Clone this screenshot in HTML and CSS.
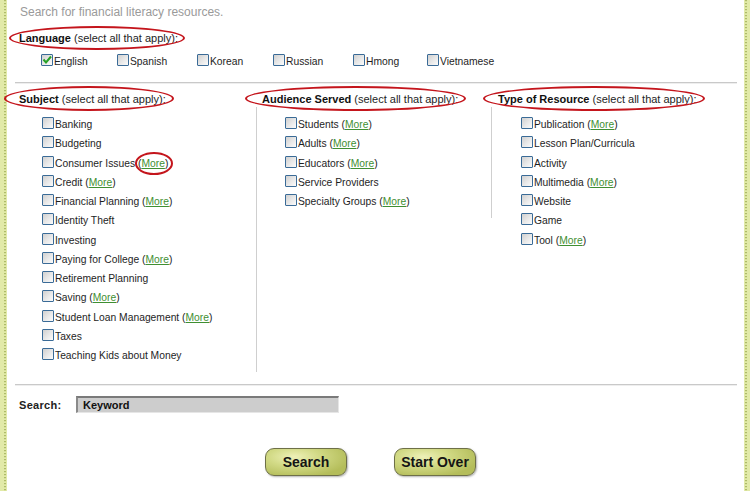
FILE: index.html
```html
<!DOCTYPE html>
<html lang="en">
<head>
<meta charset="utf-8">
<title>Search for financial literacy resources</title>
<link rel="stylesheet" href="styles.css">
</head>
<body>
<div class="page">
  <div class="edge edge-left"></div>
  <main class="main">
    <p class="intro">Search for financial literacy resources.</p>

    <section class="lang">
      <h2 class="hd"><span class="ring ring-lang"><b>Language</b> (select all that apply):</span></h2>
      <div class="lang-row">
        <label class="opt"><span class="cb"><svg class="tick" viewBox="0 0 12 12"><path d="M2.5 5.5 L5 8.5 L10 2.5" /></svg></span><span class="txt">English</span></label>
        <label class="opt"><span class="cb"></span><span class="txt">Spanish</span></label>
        <label class="opt"><span class="cb"></span><span class="txt">Korean</span></label>
        <label class="opt"><span class="cb"></span><span class="txt">Russian</span></label>
        <label class="opt"><span class="cb"></span><span class="txt">Hmong</span></label>
        <label class="opt"><span class="cb"></span><span class="txt">Vietnamese</span></label>
      </div>
    </section>

    <hr class="rule">

    <section class="cols">
      <div class="col col-subject">
        <h2 class="hd"><span class="ring ring-subj"><b>Subject</b> (select all that apply):</span></h2>
        <ul class="list">
          <li><span class="cb"></span><span class="txt">Banking</span></li>
          <li><span class="cb"></span><span class="txt">Budgeting</span></li>
          <li><span class="cb"></span><span class="txt">Consumer Issues <span class="ring ring-more">(<a class="more" href="#">More</a>)</span></span></li>
          <li><span class="cb"></span><span class="txt">Credit (<a class="more" href="#">More</a>)</span></li>
          <li><span class="cb"></span><span class="txt">Financial Planning (<a class="more" href="#">More</a>)</span></li>
          <li><span class="cb"></span><span class="txt">Identity Theft</span></li>
          <li><span class="cb"></span><span class="txt">Investing</span></li>
          <li><span class="cb"></span><span class="txt">Paying for College (<a class="more" href="#">More</a>)</span></li>
          <li><span class="cb"></span><span class="txt">Retirement Planning</span></li>
          <li><span class="cb"></span><span class="txt">Saving (<a class="more" href="#">More</a>)</span></li>
          <li><span class="cb"></span><span class="txt">Student Loan Management (<a class="more" href="#">More</a>)</span></li>
          <li><span class="cb"></span><span class="txt">Taxes</span></li>
          <li><span class="cb"></span><span class="txt">Teaching Kids about Money</span></li>
        </ul>
      </div>
      <div class="col col-aud">
        <h2 class="hd"><span class="ring ring-aud"><b>Audience Served</b> (select all that apply):</span></h2>
        <ul class="list">
          <li><span class="cb"></span><span class="txt">Students (<a class="more" href="#">More</a>)</span></li>
          <li><span class="cb"></span><span class="txt">Adults (<a class="more" href="#">More</a>)</span></li>
          <li><span class="cb"></span><span class="txt">Educators (<a class="more" href="#">More</a>)</span></li>
          <li><span class="cb"></span><span class="txt">Service Providers</span></li>
          <li><span class="cb"></span><span class="txt">Specialty Groups (<a class="more" href="#">More</a>)</span></li>
        </ul>
      </div>
      <div class="col col-type">
        <h2 class="hd"><span class="ring ring-type"><b>Type of Resource</b> (select all that apply):</span></h2>
        <ul class="list">
          <li><span class="cb"></span><span class="txt">Publication (<a class="more" href="#">More</a>)</span></li>
          <li><span class="cb"></span><span class="txt">Lesson Plan/Curricula</span></li>
          <li><span class="cb"></span><span class="txt">Activity</span></li>
          <li><span class="cb"></span><span class="txt">Multimedia (<a class="more" href="#">More</a>)</span></li>
          <li><span class="cb"></span><span class="txt">Website</span></li>
          <li><span class="cb"></span><span class="txt">Game</span></li>
          <li><span class="cb"></span><span class="txt">Tool (<a class="more" href="#">More</a>)</span></li>
        </ul>
      </div>
    </section>

    <hr class="rule rule-bottom">

    <div class="search-row">
      <span class="search-label">Search:</span>
      <input class="keyword" type="text" value="Keyword">
    </div>

    <div class="buttons">
      <button class="btn" type="button">Search</button>
      <button class="btn" type="button">Start Over</button>
    </div>
  </main>
  <div class="edge edge-right"></div>
</div>
</body>
</html>
```

FILE: styles.css
```css
* { box-sizing: border-box; }

body {
  margin: 0;
  background: #fff;
  color: #1e1e1e;
  font-family: "Liberation Sans", Arial, sans-serif;
}

.page {
  display: flex;
  width: 750px;
  height: 491px;
  overflow: hidden;
}

.edge {
  flex: none;
  background-color: #e2eaa8;
  background-image: repeating-linear-gradient(to bottom, #aebb68 0 1px, #d6e09a 1px 2px, transparent 2px 3px);
  background-repeat: no-repeat;
}
.edge-left {
  width: 7px;
  background-size: 2px 100%;
  background-position: 4px 0;
}
.edge-right {
  width: 6px;
  background-size: 2px 100%;
  background-position: 1px 0;
}

.main {
  flex: 1;
  padding: 0 7px 0 8px;
}

.intro {
  margin: 0 0 0 5px;
  padding-top: 4px;
  font-size: 12px;
  line-height: 16px;
  color: #9a9a9a;
}

.hd {
  margin: 0;
  font-size: 11px;
  font-weight: normal;
  line-height: 16px;
  white-space: nowrap;
}
.hd b { color: #111; }

.ring {
  position: relative;
  display: inline-block;
}
.ring::after {
  content: "";
  position: absolute;
  border: 2px solid #c4151c;
  border-radius: 50%;
  pointer-events: none;
}
.ring-lang::after { left: -10px; right: -7px; top: -4px; bottom: -4px; }
.ring-subj::after { left: -15px; right: -8px; top: -5px; bottom: -4px; }
.ring-aud::after  { left: -17px; right: -8px; top: -5px; bottom: -4px; }
.ring-type::after { left: -15px; right: -8px; top: -5px; bottom: -4px; }
.ring-more::after { left: -3px; right: -5px; top: -6px; bottom: -6px; }

.lang .hd {
  margin: 10px 0 0 4px;
}

.lang-row {
  display: grid;
  grid-template-columns: 76px 80px 76px 80px 74px auto;
  margin: 6px 0 0 26px;
  font-size: 10.3px;
  line-height: 19px;
}

.opt {
  display: flex;
  align-items: center;
}

.txt { white-space: nowrap; }

.cb {
  position: relative;
  flex: none;
  width: 12px;
  height: 12px;
  margin: -3px 1px 0 0;
  border: 1px solid #3a6b97;
  border-radius: 1px;
  background: linear-gradient(135deg, #d0d0d0 0%, #e9e9e9 55%, #fbfbfb 100%);
}
.tick {
  position: absolute;
  left: -1px;
  top: -1px;
  width: 12px;
  height: 12px;
  fill: none;
  stroke: #27a127;
  stroke-width: 2;
}

.rule {
  height: 0;
  margin: 11px 0 0;
  border: 0;
  border-top: 1px solid #c9c9c9;
  border-bottom: 1px solid #eeeeee;
}
.rule-bottom { margin-top: 12px; }

.cols {
  display: grid;
  grid-template-columns: 242px 235px 1fr;
  align-items: start;
  margin-top: 7px;
}

.col .hd { padding-left: 5px; }
.col-subject .hd { padding-left: 4px; }
.col-type .hd { padding-left: 6px; }

.list {
  list-style: none;
  margin: 0;
  padding: 8px 0 7px 28px;
  font-size: 10.3px;
}
.col-subject .list { padding-left: 27px; border-right: 1px solid #cfcfcf; }
.col-aud .list { border-right: 1px solid #cfcfcf; }
.col-type .list { padding-left: 29px; }

.list li {
  display: flex;
  align-items: center;
  height: 19.25px;
}

.more {
  color: #3f8f32;
  text-decoration: underline;
}

.search-row {
  display: flex;
  align-items: center;
  margin-top: 10px;
  padding-left: 4px;
}
.search-label {
  width: 57px;
  font-size: 11px;
  font-weight: bold;
  letter-spacing: 0.3px;
  color: #222;
}
.keyword {
  width: 263px;
  height: 17px;
  padding: 0 0 0 5px;
  border: 0;
  border-top: 2px solid #7a7a7a;
  border-left: 2px solid #8a8a8a;
  border-right: 1px solid #e6e6e6;
  border-bottom: 1px solid #e6e6e6;
  background: #cdcdcd;
  font-family: "Liberation Sans", Arial, sans-serif;
  font-size: 11px;
  font-weight: bold;
  color: #111;
}

.buttons {
  display: flex;
  gap: 47px;
  margin-top: 35px;
  padding-left: 250px;
}
.btn {
  width: 82px;
  height: 28px;
  padding: 0;
  border: 1px solid #6e7048;
  border-radius: 9px;
  background: radial-gradient(ellipse 70% 80% at 35% 30%, #eef1b8 0%, #d2da86 45%, #b4bd5a 100%);
  box-shadow: 1px 1px 2px rgba(0, 0, 0, 0.3);
  font-family: "Liberation Sans", Arial, sans-serif;
  font-size: 14px;
  font-weight: bold;
  color: #151515;
}
```
